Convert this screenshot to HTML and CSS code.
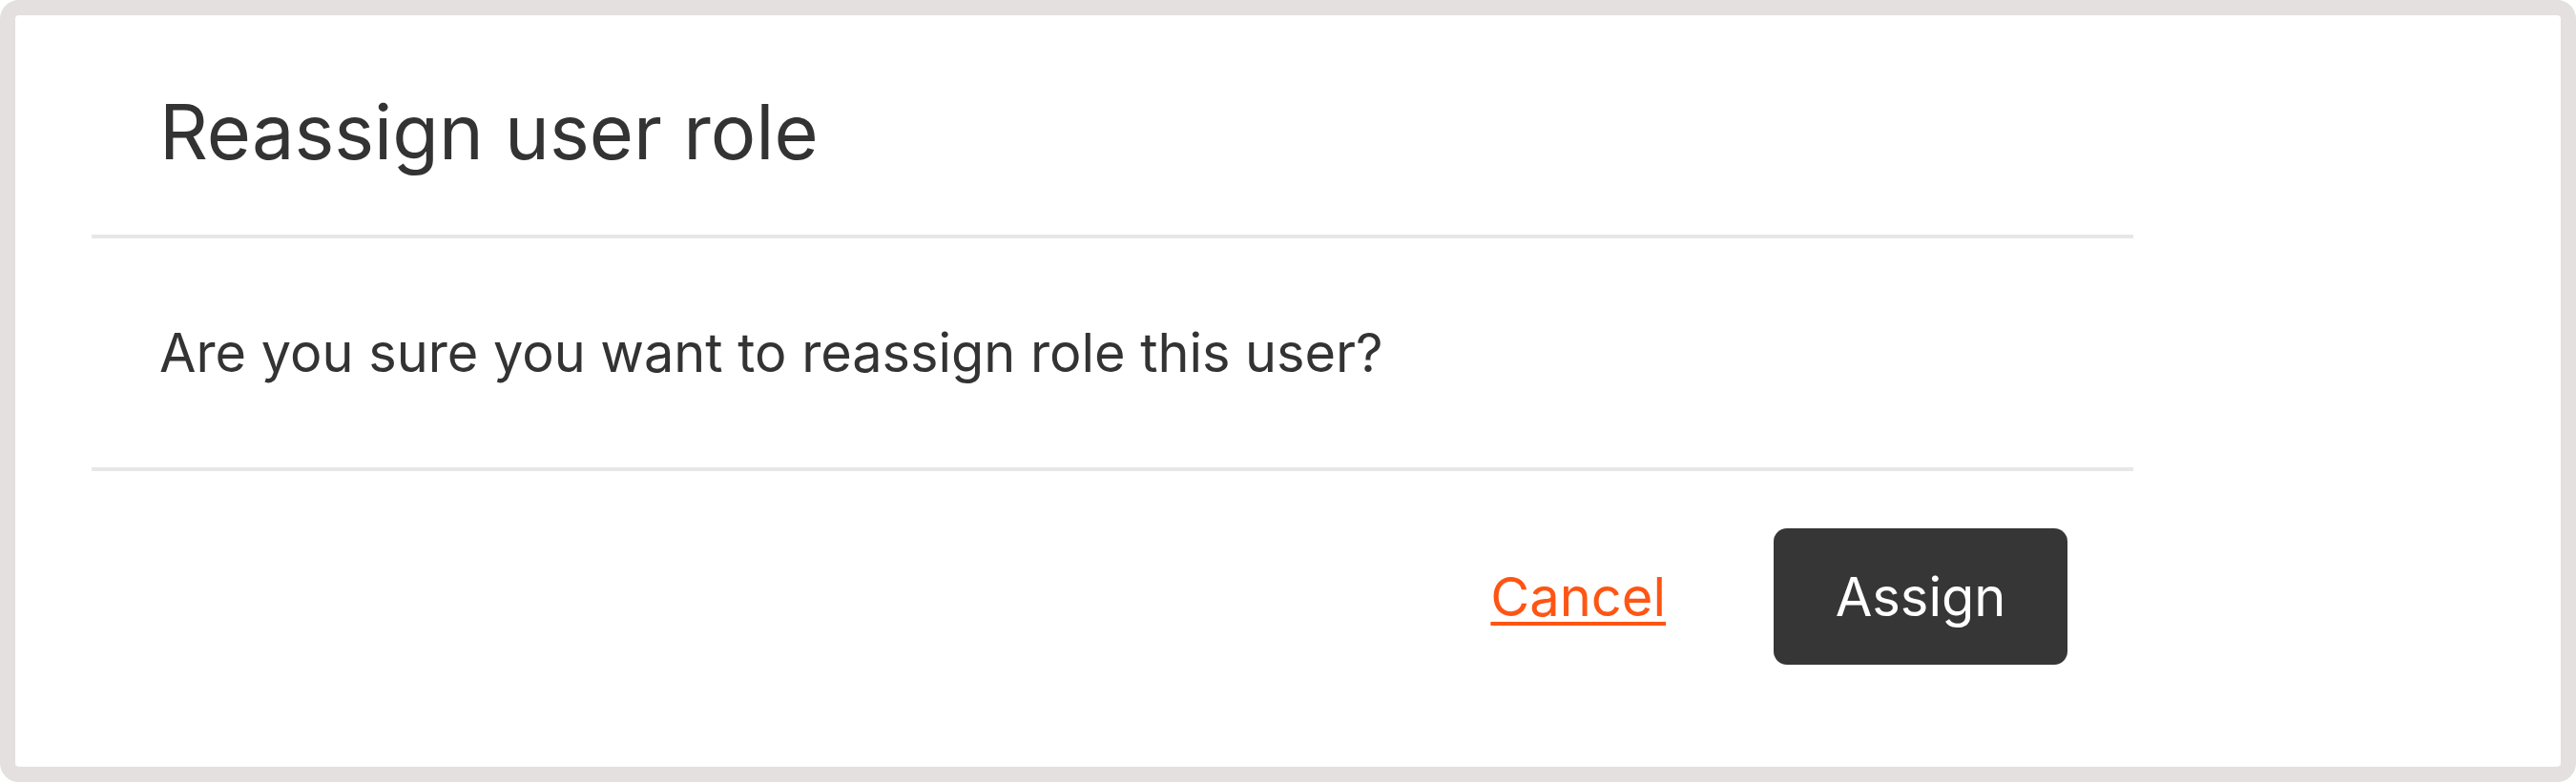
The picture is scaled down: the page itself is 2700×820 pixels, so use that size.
FILE: index.html
```html
<!DOCTYPE html>
<html lang="en">
<head>
<meta charset="utf-8">
<title>Reassign user role</title>
<link rel="stylesheet" href="styles.css">
</head>
<body>
<div class="frame">
  <div class="modal">
    <div class="modal-header">
      <h2 class="modal-title">Reassign user role</h2>
    </div>
    <div class="modal-body">
      <p class="modal-text">Are you sure you want to reassign role this user?</p>
    </div>
    <div class="modal-footer">
      <a class="cancel-link" href="#">Cancel</a>
      <button class="assign-btn" type="button">Assign</button>
    </div>
  </div>
</div>
</body>
</html>
```

FILE: styles.css
```css
html, body {
  margin: 0;
  padding: 0;
  background: #ffffff;
}

body {
  font-family: Inter, "Noto Sans", "Liberation Sans", sans-serif;
  color: #333333;
}

.frame {
  box-sizing: border-box;
  width: 2700px;
  height: 820px;
  border: 16px solid #e3e0df;
  border-radius: 20px;
  background: #ffffff;
}

.modal {
  width: 2140px;
  margin-left: 80px;
}

.modal-header {
  padding: 74px 0 60px 71px;
  border-bottom: 4px solid #e7e7e7;
}

.modal-title {
  margin: 0;
  font-size: 79.3px;
  line-height: 96px;
  font-weight: 400;
  color: #333333;
}

.modal-body {
  padding: 78px 0 78px 71px;
  border-bottom: 4px solid #e7e7e7;
}

.modal-text {
  margin: 0;
  font-size: 55.8px;
  line-height: 84px;
  font-weight: 400;
  color: #333333;
}

.modal-footer {
  display: flex;
  justify-content: flex-end;
  align-items: center;
  gap: 113px;
  padding: 60px 69px 0 0;
}

.cancel-link {
  font-size: 56px;
  line-height: 84px;
  color: #ff5514;
  text-decoration: underline;
  text-decoration-thickness: 4px;
  text-underline-offset: 6px;
}

.assign-btn {
  box-sizing: border-box;
  width: 308px;
  height: 143px;
  border: none;
  border-radius: 14px;
  background: #363636;
  color: #ffffff;
  font-family: Inter, "Noto Sans", "Liberation Sans", sans-serif;
  font-size: 56px;
  font-weight: 400;
  display: flex;
  align-items: center;
  justify-content: center;
  padding: 0;
}
```
